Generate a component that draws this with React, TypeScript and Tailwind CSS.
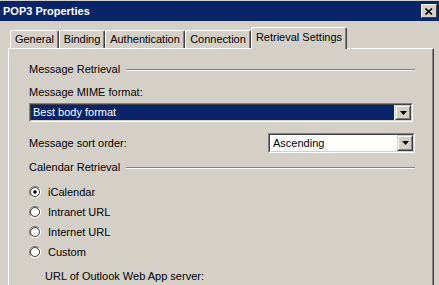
import type { ReactNode } from 'react'

const TABS = [
  { label: 'General', w: 'w-[49px]' },
  { label: 'Binding', w: 'w-[46px]' },
  { label: 'Authentication', w: 'w-[80px]' },
  { label: 'Connection', w: 'w-[66px]' },
]

const RADIOS = ['iCalendar', 'Intranet URL', 'Internet URL', 'Custom']

function Radio({ checked }: { checked?: boolean }) {
  return (
    <svg width="12" height="12" viewBox="0 0 12 12" className="shrink-0">
      <path d="M10 2 A5.5 5.5 0 0 0 2 10" fill="none" stroke="#808080" strokeWidth="1" />
      <path d="M2 10 A5.5 5.5 0 0 0 10 2" fill="none" stroke="#ffffff" strokeWidth="1" />
      <circle cx="6" cy="6" r="4.5" fill="#ffffff" stroke="#404040" strokeWidth="1" />
      {checked && <circle cx="6" cy="6" r="1.8" fill="#000000" />}
    </svg>
  )
}

function DropButton() {
  return (
    <div className="w-[16px] h-full shrink-0 bg-[#d4d0c8] border-t border-l border-t-[#d4d0c8] border-l-[#d4d0c8] border-r border-b border-r-[#404040] border-b-[#404040] flex">
      <div className="flex-1 border-t border-l border-t-white border-l-white border-r border-b border-r-[#808080] border-b-[#808080] flex items-center justify-center">
        <svg width="7" height="4" viewBox="0 0 7 4"><path d="M0 0 H7 L3.5 4 Z" fill="#000" /></svg>
      </div>
    </div>
  )
}

function Select({ children, className }: { children: ReactNode; className: string }) {
  return (
    <div className={`${className} border-t border-l border-t-[#808080] border-l-[#808080] border-r border-b border-r-white border-b-white flex`}>
      <div className="flex-1 flex border-t border-l border-t-[#404040] border-l-[#404040] border-r border-b border-r-[#d4d0c8] border-b-[#d4d0c8] bg-white">
        <div className="flex-1 flex items-center">{children}</div>
        <DropButton />
      </div>
    </div>
  )
}

function GroupHeader({ title, className = '' }: { title: string; className?: string }) {
  return (
    <div className={`flex items-center h-[13px] ${className}`}>
      <span className="whitespace-nowrap">{title}</span>
      <div className="flex-1 ml-[6px] flex flex-col">
        <div className="h-px bg-[#808080]" />
        <div className="h-px bg-white" />
      </div>
    </div>
  )
}

export default function App() {
  return (
    <div className="w-[439px] h-[285px] overflow-hidden bg-[#d4d0c8] flex flex-col font-['Liberation_Sans',Arial,sans-serif] text-[11px] text-black leading-[13px]">
      <div className="mt-px h-[20px] bg-[#0a246a] flex items-center pl-[3px] pr-[2px]">
        <span className="flex-1 text-white font-bold text-[11px]">POP3 Properties</span>
        <div className="w-[16px] h-[14px] bg-[#d4d0c8] border-t border-l border-t-white border-l-white border-r border-b border-r-[#404040] border-b-[#404040] flex items-center justify-center">
          <svg width="8" height="7" viewBox="0 0 8 7">
            <path d="M0.5 0.5 L7 6.5 M7 0.5 L0.5 6.5" stroke="#000" strokeWidth="1.6" />
          </svg>
        </div>
      </div>

      <div className="mt-[6px] h-[21px] flex items-end pl-[10px] relative z-10">
        {TABS.map((t) => (
          <div key={t.label}
            className={`${t.w} h-[18px] flex items-center justify-center border-t border-l border-t-white border-l-white border-r border-r-[#404040] rounded-t-[2px] shadow-[inset_-1px_0_0_#808080]`}>
            {t.label}
          </div>
        ))}
        <div className="w-[96px] h-[22px] -mb-px bg-[#d4d0c8] flex items-center justify-center pb-[3px] border-t border-l border-t-white border-l-white border-r border-r-[#404040] rounded-t-[2px] shadow-[inset_-1px_0_0_#808080]">
          Retrieval Settings
        </div>
      </div>

      <div className="flex-1 ml-[8px] w-[426px] border-t border-l border-t-white border-l-white border-r border-r-[#404040] shadow-[inset_-1px_0_0_#808080] pl-[20px] pr-[18px] pt-[14px]">
        <GroupHeader title="Message Retrieval" />
        <div className="mt-[10px] h-[13px]">Message MIME format:</div>
        <Select className="mt-[4px] h-[19px] w-[384px]">
          <div className="h-full flex-1 bg-[#0a246a] text-white flex items-center pl-[2px] mr-px">Best body format</div>
        </Select>
        <div className="mt-[11px] h-[20px] flex items-center justify-between">
          <span>Message sort order:</span>
          <Select className="h-[20px] w-[147px]">
            <span className="pl-[3px]">Ascending</span>
          </Select>
        </div>
        <GroupHeader title="Calendar Retrieval" className="mt-[8px]" />
        <div className="mt-[8px] flex flex-col">
          {RADIOS.map((r, i) => (
            <div key={r} className="h-[20px] flex items-center gap-[6px]">
              <Radio checked={i === 0} />
              <span className="ml-px">{r}</span>
            </div>
          ))}
        </div>
        <div className="mt-[8px] pl-[16px] h-[13px]">URL of Outlook Web App server:</div>
      </div>
    </div>
  )
}
